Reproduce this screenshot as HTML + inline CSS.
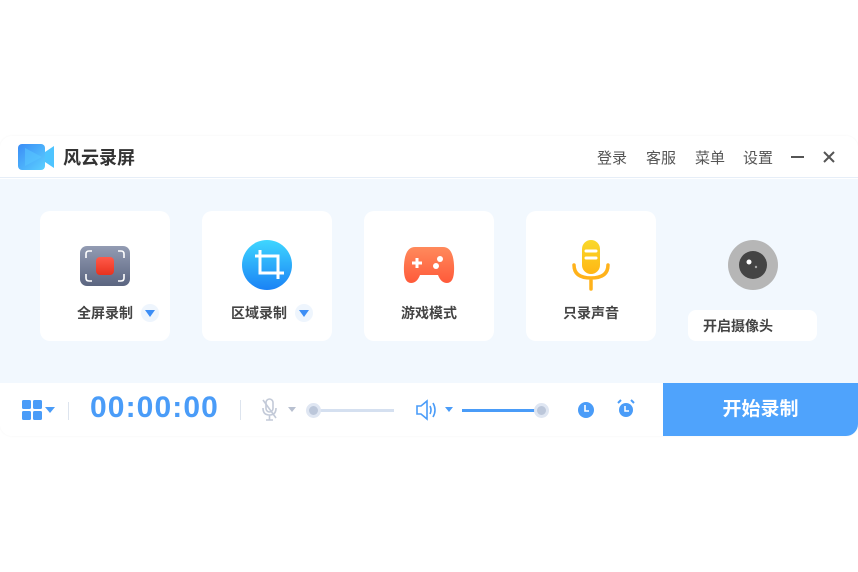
<!DOCTYPE html>
<html><head><meta charset="utf-8"><style>
*{margin:0;padding:0;box-sizing:border-box}
body{width:858px;height:572px;background:#fff;font-family:"Liberation Sans","Noto Sans CJK SC",sans-serif;position:relative;overflow:hidden}
.win{position:absolute;left:0;top:136px;width:858px;height:300px;border-radius:12px;background:#fff;overflow:hidden;box-shadow:0 0 2px rgba(0,0,0,.05)}
.hdr{position:absolute;left:0;top:0;width:858px;height:42px;border-bottom:1px solid #e6eef8;background:#fff}
.body{position:absolute;left:0;top:43px;width:858px;height:204px;background:#f2f8fe}
.card{position:absolute;top:32px;width:130px;height:130px;background:#fff;border-radius:10px}
.lbl{position:absolute;top:92px;font-size:14px;font-weight:bold;color:#444;white-space:nowrap}
.dd{position:absolute;width:18px;height:18px;border-radius:9px;background:#eef5fd}
.dd:after{content:"";position:absolute;left:4px;top:6px;border-left:5px solid transparent;border-right:5px solid transparent;border-top:7px solid #3d8ef5}
.bar{position:absolute;left:0;top:247px;width:858px;height:53px;background:#fff}
.btn{position:absolute;left:663px;top:0;width:195px;height:53px;background:#4fa3fc;color:#fff;font-size:19px;font-weight:bold;text-align:center;line-height:53px}
.menu{position:absolute;top:11px;font-size:15px;color:#555}
</style></head><body>
<div class="win">
 <div class="hdr">
  <svg style="position:absolute;left:18px;top:8px" width="36" height="26" viewBox="0 0 36 26">
   <defs><linearGradient id="g1" x1="0" y1="0" x2="1" y2="1"><stop offset="0" stop-color="#3a8cf6"/><stop offset="1" stop-color="#5bd0ff"/></linearGradient></defs>
   <rect x="0" y="0" width="27" height="26" rx="4" fill="url(#g1)"/>
   <path d="M27 8 L36 2 L36 24 L27 18Z" fill="#4ec4ff"/>
   <path d="M7 4 L24 13 L7 22Z" fill="#57c5ff" opacity=".6"/>
  </svg>
  <div style="position:absolute;left:63px;top:8px;font-size:18px;font-weight:bold;color:#333">风云录屏</div>
  <div class="menu" style="left:597px">登录</div>
  <div class="menu" style="left:646px">客服</div>
  <div class="menu" style="left:695px">菜单</div>
  <div class="menu" style="left:743px">设置</div>
  <div style="position:absolute;left:791px;top:20px;width:13px;height:2px;background:#555"></div>
  <svg style="position:absolute;left:822px;top:14px" width="14" height="14"><path d="M2 2L12 12M12 2L2 12" stroke="#555" stroke-width="2"/></svg>
 </div>
 <div class="body">
  <div class="card" style="left:40px">
   <svg style="position:absolute;left:40px;top:35px" width="50" height="40" viewBox="0 0 50 40">
    <defs><linearGradient id="g2" x1="0" y1="0" x2="0" y2="1"><stop offset="0" stop-color="#939cb3"/><stop offset="1" stop-color="#5b6580"/></linearGradient><linearGradient id="g3" x1="0" y1="0" x2="0" y2="1"><stop offset="0" stop-color="#ff5a4a"/><stop offset="1" stop-color="#e8321e"/></linearGradient></defs>
    <rect width="50" height="40" rx="7" fill="url(#g2)"/>
    <path d="M6 12V8Q6 5 9 5H12M38 5H41Q44 5 44 8V12M44 28V32Q44 35 41 35H38M12 35H9Q6 35 6 32V28" stroke="#fff" stroke-width="1.6" fill="none"/>
    <rect x="16" y="11" width="18" height="18" rx="4" fill="url(#g3)"/>
   </svg>
   <div class="lbl" style="left:37px">全屏录制</div>
   <div class="dd" style="left:101px;top:93px"></div>
  </div>
  <div class="card" style="left:202px">
   <svg style="position:absolute;left:40px;top:29px" width="50" height="50" viewBox="0 0 50 50">
    <defs><linearGradient id="g4" x1="0" y1="0" x2="0" y2="1"><stop offset="0" stop-color="#3fd6ff"/><stop offset="1" stop-color="#1a82f5"/></linearGradient></defs>
    <circle cx="25" cy="25" r="25" fill="url(#g4)"/>
    <path d="M13 16H36V39M18 10V33H42" stroke="#fff" stroke-width="3" fill="none"/>
   </svg>
   <div class="lbl" style="left:29px">区域录制</div>
   <div class="dd" style="left:93px;top:93px"></div>
  </div>
  <div class="card" style="left:364px">
   <svg style="position:absolute;left:39px;top:34px" width="52" height="40" viewBox="0 0 52 40">
    <defs><linearGradient id="g5" x1="0" y1="0" x2="0" y2="1"><stop offset="0" stop-color="#ff8a5c"/><stop offset="1" stop-color="#ff5a3a"/></linearGradient></defs>
    <path d="M12 2H40Q50 2 51 20Q52 38 44 38Q38 38 35 30H17Q14 38 8 38Q0 38 1 20Q2 2 12 2Z" fill="url(#g5)"/>
    <path d="M9 18H19M14 13V23" stroke="#fff" stroke-width="3"/>
    <circle cx="37" cy="14" r="3" fill="#fff"/><circle cx="33" cy="21" r="3" fill="#fff"/>
   </svg>
   <div class="lbl" style="left:37px">游戏模式</div>
  </div>
  <div class="card" style="left:526px">
   <svg style="position:absolute;left:46px;top:28px" width="38" height="52" viewBox="0 0 38 52">
    <defs><linearGradient id="g6" x1="0" y1="0" x2="0" y2="1"><stop offset="0" stop-color="#f9d92a"/><stop offset="1" stop-color="#ffb614"/></linearGradient></defs>
    <rect x="10" y="1" width="18" height="34" rx="9" fill="url(#g6)"/>
    <path d="M14 12H24M14 19H24" stroke="#fff" stroke-width="3" stroke-linecap="round"/>
    <path d="M2 26Q2 39 19 39Q36 39 36 26M19 39V50" stroke="#ffb21a" stroke-width="3.5" fill="none" stroke-linecap="round"/>
   </svg>
   <div class="lbl" style="left:37px">只录声音</div>
  </div>
  <svg style="position:absolute;left:728px;top:61px" width="50" height="50"><circle cx="25" cy="25" r="25" fill="#b6b6b6"/><circle cx="25" cy="25" r="14" fill="#444"/><circle cx="21" cy="22" r="2.5" fill="#fff"/><circle cx="28" cy="27" r="1.2" fill="#aaa"/></svg>
  <div style="position:absolute;left:688px;top:131px;width:129px;height:31px;background:#fff;border-radius:8px;font-size:14px;font-weight:bold;color:#444;padding:6px 0 0 15px">开启摄像头</div>
 </div>
 <div class="bar">
  <svg style="position:absolute;left:22px;top:17px" width="36" height="20"><rect x="0" y="0" width="9" height="9" rx="1.5" fill="#4a9cf8"/><rect x="11" y="0" width="9" height="9" rx="1.5" fill="#4a9cf8"/><rect x="0" y="11" width="9" height="9" rx="1.5" fill="#4a9cf8"/><rect x="11" y="11" width="9" height="9" rx="1.5" fill="#4a9cf8"/><path d="M23 7H33L28 13Z" fill="#4a9cf8"/></svg>
  <div style="position:absolute;left:68px;top:19px;width:1px;height:18px;background:#dde4ee"></div>
  <div style="position:absolute;left:90px;top:8px;font-size:30px;font-weight:bold;color:#4a9cf8;letter-spacing:1.1px">00:00:00</div>
  <div style="position:absolute;left:240px;top:17px;width:1px;height:20px;background:#dde4ee"></div>
  <svg style="position:absolute;left:260px;top:15px" width="42" height="24"><rect x="6" y="1" width="7" height="13" rx="3.5" fill="none" stroke="#c3cad8" stroke-width="1.6"/><path d="M3 10Q3 17 9.5 17Q16 17 16 10M9.5 17V22M6 22H13M3 2L16 20" stroke="#c3cad8" stroke-width="1.6" fill="none"/><path d="M28 9H36L32 14Z" fill="#b8c0d0"/></svg>
  <div style="position:absolute;left:316px;top:26px;width:78px;height:3px;background:#d5e0f0"></div>
  <div style="position:absolute;left:306px;top:20px;width:15px;height:15px;border-radius:8px;background:#bcc7da;border:3px solid #dfe6f2"></div>
  <svg style="position:absolute;left:415px;top:15px" width="42" height="24"><path d="M2 8H6L12 3V21L6 16H2Z" fill="none" stroke="#4a9cf8" stroke-width="1.6"/><path d="M15 8Q17 12 15 16M18 5Q22 12 18 19" stroke="#4a9cf8" stroke-width="1.6" fill="none"/><path d="M30 9H38L34 14Z" fill="#4a9cf8"/></svg>
  <div style="position:absolute;left:462px;top:26px;width:76px;height:3px;background:#4a9cf8"></div>
  <div style="position:absolute;left:534px;top:20px;width:15px;height:15px;border-radius:8px;background:#bcc7da;border:3px solid #dfe6f2"></div>
  <svg style="position:absolute;left:577px;top:18px" width="18" height="18"><circle cx="9" cy="9" r="8" fill="#4a9cf8"/><path d="M8 4V10H12" stroke="#fff" stroke-width="1.6" fill="none"/></svg>
  <svg style="position:absolute;left:616px;top:16px" width="20" height="20"><circle cx="10" cy="11" r="7" fill="#4a9cf8"/><path d="M2 4L5 1M18 4L15 1" stroke="#4a9cf8" stroke-width="2"/><path d="M9 7V12H13" stroke="#fff" stroke-width="1.5" fill="none"/></svg>
  <div class="btn">开始录制</div>
 </div>
</div>
</body></html>
